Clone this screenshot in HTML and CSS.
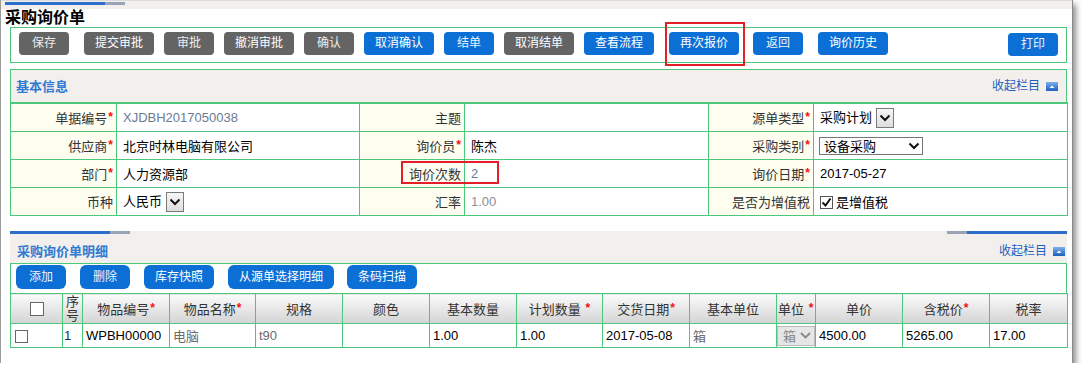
FILE: index.html
```html
<!DOCTYPE html>
<html lang="zh-CN">
<head>
  <meta charset="UTF-8">
  <title>采购询价单</title>
  <link rel="stylesheet" href="styles.css">
</head>
<body>
  <div class="win">
    <div class="topbar"><span class="bar-blue"></span><span class="bar-gray"></span></div>
    <h1 class="title">采购询价单</h1>

    <div class="toolbar">
      <button class="btn gray thin">保存</button>
      <button class="btn gray w4 sp">提交审批</button>
      <button class="btn gray thin">审批</button>
      <button class="btn gray w4">撤消审批</button>
      <button class="btn gray thin">确认</button>
      <button class="btn blue w4">取消确认</button>
      <button class="btn blue thin">结单</button>
      <button class="btn gray w4">取消结单</button>
      <button class="btn blue w4">查看流程</button>
      <span class="mark sp"><button class="btn blue w4">再次报价</button></span>
      <button class="btn blue thin sp4">返回</button>
      <button class="btn blue w4 sp">询价历史</button>
      <span class="fill"></span>
      <button class="btn blue thin print">打印</button>
    </div>

    <!-- 基本信息 -->
    <div class="sec-head boxed">
      <span class="sec-title">基本信息</span>
      <span class="fold">收起栏目<svg class="fold-ico" width="12" height="9" viewBox="0 0 12 9"><defs><linearGradient id="g1" x1="0" y1="0" x2="0" y2="1"><stop offset="0" stop-color="#7fb0ea"/><stop offset="1" stop-color="#1d5fc0"/></linearGradient></defs><rect x="0" y="0" width="12" height="9" fill="url(#g1)"/><path d="M3.5 6 L6 3.5 L8.5 6 Z" fill="#fff"/></svg></span>
    </div>
    <table class="form">
      <colgroup>
        <col style="width:106px"><col style="width:243px"><col style="width:105px">
        <col style="width:244px"><col style="width:105px"><col style="width:254px">
      </colgroup>
      <tr>
        <td class="lbl">单据编号<em>*</em></td>
        <td class="val muted">XJDBH2017050038</td>
        <td class="lbl">主题</td>
        <td class="val"></td>
        <td class="lbl">源单类型<em>*</em></td>
        <td class="val">采购计划<span class="dd"><svg width="12" height="8" viewBox="0 0 12 8"><polyline points="1.5,1.5 6,6 10.5,1.5" fill="none" stroke="#111" stroke-width="2"/></svg></span></td>
      </tr>
      <tr>
        <td class="lbl">供应商<em>*</em></td>
        <td class="val">北京时林电脑有限公司</td>
        <td class="lbl">询价员<em>*</em></td>
        <td class="val">陈杰</td>
        <td class="lbl">采购类别<em>*</em></td>
        <td class="val"><span class="select">设备采购<svg width="12" height="8" viewBox="0 0 12 8"><polyline points="1.5,1.5 6,6 10.5,1.5" fill="none" stroke="#111" stroke-width="2"/></svg></span></td>
      </tr>
      <tr>
        <td class="lbl">部门<em>*</em></td>
        <td class="val">人力资源部</td>
        <td class="lbl marked">询价次数</td>
        <td class="val muted">2</td>
        <td class="lbl">询价日期<em>*</em></td>
        <td class="val">2017-05-27</td>
      </tr>
      <tr>
        <td class="lbl">币种</td>
        <td class="val">人民币<span class="dd"><svg width="12" height="8" viewBox="0 0 12 8"><polyline points="1.5,1.5 6,6 10.5,1.5" fill="none" stroke="#111" stroke-width="2"/></svg></span></td>
        <td class="lbl">汇率</td>
        <td class="val grey">1.00</td>
        <td class="lbl">是否为增值税</td>
        <td class="val"><span class="cb on"><svg width="11" height="11" viewBox="0 0 11 11"><polyline points="1.5,5.5 4.5,8.5 9.5,1.5" fill="none" stroke="#111" stroke-width="2"/></svg></span>是增值税</td>
      </tr>
    </table>

    <!-- 采购询价单明细 -->
    <div class="sec-head detail">
      <div class="strip">
        <span><span class="bar-blue"></span><span class="bar-gray"></span></span>
        <span><span class="bar-gray"></span><span class="bar-blue"></span></span>
      </div>
      <span class="sec-title">采购询价单明细</span>
      <span class="fold">收起栏目<svg class="fold-ico" width="12" height="9" viewBox="0 0 12 9"><defs><linearGradient id="g2" x1="0" y1="0" x2="0" y2="1"><stop offset="0" stop-color="#7fb0ea"/><stop offset="1" stop-color="#1d5fc0"/></linearGradient></defs><rect x="0" y="0" width="12" height="9" fill="url(#g2)"/><path d="M3.5 6 L6 3.5 L8.5 6 Z" fill="#fff"/></svg></span>
    </div>
    <div class="subbar">
      <button class="btn blue big thin">添加</button>
      <button class="btn blue big thin">删除</button>
      <button class="btn blue big w4">库存快照</button>
      <button class="btn blue big w7">从源单选择明细</button>
      <button class="btn blue big w4 tight">条码扫描</button>
    </div>
    <table class="grid">
      <colgroup>
        <col style="width:52px"><col style="width:20px"><col style="width:87px"><col style="width:86px">
        <col style="width:87px"><col style="width:87px"><col style="width:87px"><col style="width:86px">
        <col style="width:87px"><col style="width:87px"><col style="width:39px"><col style="width:87px">
        <col style="width:87px"><col style="width:78px">
      </colgroup>
      <tr class="head">
        <th><span class="cb"></span></th>
        <th class="narrow">序号</th>
        <th>物品编号<em>*</em></th>
        <th>物品名称<em>*</em></th>
        <th>规格</th>
        <th>颜色</th>
        <th>基本数量</th>
        <th>计划数量 <em>*</em></th>
        <th>交货日期<em>*</em></th>
        <th>基本单位</th>
        <th class="left">单位 <em>*</em></th>
        <th>单价</th>
        <th>含税价<em>*</em></th>
        <th>税率</th>
      </tr>
      <tr class="row">
        <td class="chk"><span class="cb"></span></td>
        <td class="no">1</td>
        <td>WPBH00000</td>
        <td class="grey">电脑</td>
        <td class="grey">t90</td>
        <td></td>
        <td>1.00</td>
        <td>1.00</td>
        <td>2017-05-08</td>
        <td class="grey">箱</td>
        <td class="unit"><span class="unit-sel">箱<svg width="11" height="7" viewBox="0 0 11 7"><polyline points="1,1 5.5,5.5 10,1" fill="none" stroke="#888" stroke-width="1.8"/></svg></span></td>
        <td>4500.00</td>
        <td>5265.00</td>
        <td>17.00</td>
      </tr>
    </table>
  </div>
</body>
</html>
```

FILE: styles.css
```css
body {
  margin: 0;
  background: #fff;
  font-family: "Liberation Sans", "Noto Sans CJK SC", sans-serif;
  font-size: 13px;
  color: #333;
}
.win {
  width: 1071px;
  height: 363px;
  border-left: 1px solid #9c9c9c;
  border-right: 1px solid #8a8a8a;
  background: #fff;
  box-shadow: 3px 4px 6px rgba(0, 0, 0, 0.45);
}
.topbar {
  height: 8px;
  border-top: 1px solid #dcdcdc;
  background: #f2efec;
  display: flex;
  padding-left: 4px;
}
.topbar .bar-blue, .topbar .bar-gray {
  margin-top: 1px;
}
.bar-blue {
  display: inline-block;
  width: 100px;
  height: 3px;
  background: #2b6fca;
}
.bar-gray {
  display: inline-block;
  width: 20px;
  height: 3px;
  background: #98a3b6;
}
.title {
  margin: 0;
  padding-left: 4px;
  font-size: 16px;
  line-height: 18px;
  font-weight: bold;
  color: #000;
}

/* buttons */
.btn {
  height: 23px;
  width: 50px;
  padding: 0;
  border: none;
  border-radius: 4px;
  font-family: inherit;
  font-size: 12px;
  line-height: 23px;
  color: #fff;
  flex: none;
}
.btn.w4 { width: 70px; }
.btn.w7 { width: 106px; }
.btn.gray { background: #646464; }
.btn.blue { background: #0c6fd6; }
.btn.thin { color: #eef3fa; }
.btn.gray.thin { color: #ececec; }
.btn.big {
  height: 24px;
  line-height: 24px;
  border-radius: 6px;
  margin-right: 14px;
}
.btn.tight { margin-left: -1px; }

.toolbar {
  margin-left: 9px;
  width: 1057px;
  height: 36px;
  box-sizing: border-box;
  border: 1px solid #4cc87d;
  padding: 4px 8px 0 8px;
  display: flex;
  align-items: flex-start;
  gap: 10px;
}
.toolbar .sp { margin-left: 5px; }
.toolbar .sp4 { margin-left: 4px; }
.toolbar .fill { flex: 1; }
.toolbar .print { margin-top: 1px; }
.mark {
  position: relative;
  display: inline-block;
  height: 23px;
}
.mark::after {
  content: "";
  position: absolute;
  left: -4px;
  right: -6px;
  top: -10px;
  bottom: -11px;
  border: 2px solid #e3202a;
}

/* section heads */
.sec-head {
  margin-left: 9px;
  width: 1057px;
  box-sizing: border-box;
  height: 33px;
  background: #f2efec;
  display: flex;
  align-items: flex-start;
  justify-content: space-between;
}
.sec-head.boxed {
  margin-top: 6px;
  border: 1px solid #4cc87d;
  border-bottom: none;
  padding: 8px 8px 0 5px;
}
.sec-head.detail {
  margin-top: 15px;
  height: 32px;
  flex-wrap: wrap;
  padding: 0 2px 0 7px;
}
.strip {
  width: calc(100% + 9px);
  margin: 0 -2px 0 -7px;
  display: flex;
  justify-content: space-between;
  height: 3px;
}
.strip > span { display: flex; }
.sec-title {
  font-size: 13px;
  font-weight: bold;
  line-height: 17px;
  color: #2f7ad2;
}
.detail .sec-title, .detail .fold {
  margin-top: 6px;
}
.fold {
  font-size: 12px;
  line-height: 17px;
  color: #1f5fbf;
  display: flex;
  align-items: center;
}
.fold-ico {
  margin-left: 6px;
  margin-top: -1px;
}

/* basic info form */
.form {
  margin-left: 9px;
  width: 1057px;
  border-collapse: collapse;
  table-layout: fixed;
}
.form td {
  border: 1px solid #4cc87d;
  height: 27px;
  padding: 0;
  font-size: 13px;
  white-space: nowrap;
}
.form tr:first-child td {
  border-top-width: 2px;
}
.form .lbl {
  background: #fdfdf0;
  text-align: right;
  padding-right: 3px;
  color: #333;
}
.form .val {
  padding-left: 6px;
  color: #000;
}
.form .val.muted { color: #6c7b93; }
.form .val.grey { color: #8a8e99; }
em {
  font-style: normal;
  font-weight: bold;
  color: #f01010;
  font-size: 12px;
  vertical-align: 2px;
  margin-left: 1px;
}
.lbl.marked { position: relative; }
.lbl.marked::after {
  content: "";
  position: absolute;
  left: 41px;
  top: 1px;
  width: 94px;
  height: 19px;
  border: 2px solid #e3202a;
}
.dd {
  display: inline-flex;
  align-items: center;
  justify-content: center;
  box-sizing: border-box;
  width: 18px;
  height: 20px;
  margin-left: 4px;
  border: 1px solid #7a7a7a;
  background: linear-gradient(#f6f6f6, #dedede);
  vertical-align: middle;
}
.select {
  display: inline-flex;
  align-items: center;
  justify-content: space-between;
  box-sizing: border-box;
  width: 104px;
  height: 18px;
  margin-left: -1px;
  padding: 0 2px 0 4px;
  border: 1px solid #767676;
  background: #fff;
  vertical-align: middle;
}
.cb {
  display: inline-block;
  box-sizing: border-box;
  width: 13px;
  height: 13px;
  border: 1px solid #666;
  background: #fff;
  vertical-align: middle;
}
.cb.on {
  border-color: #555;
  margin-right: 3px;
  position: relative;
  top: -1px;
}
.cb.on svg { display: block; margin: 0; }

/* detail grid */
.subbar {
  margin-left: 9px;
  width: 1057px;
  box-sizing: border-box;
  border: 1px solid #4cc87d;
  border-bottom: none;
  padding: 1px 0 4px 5px;
  display: flex;
}
.grid {
  margin-left: 9px;
  width: 1057px;
  border-collapse: collapse;
  table-layout: fixed;
}
.grid th, .grid td {
  border: 1px solid #4cc87d;
  padding: 0;
  white-space: nowrap;
  overflow: hidden;
}
.grid .head th {
  height: 29px;
  background: linear-gradient(#fbfbfb, #d3d3d3);
  font-weight: normal;
  font-size: 13px;
  color: #333;
  text-align: center;
}
.grid .head th.narrow {
  white-space: normal;
  font-size: 13px;
  line-height: 14px;
}
.grid .head th.left {
  text-align: left;
  padding-left: 1px;
}
.grid .head .cb { width: 14px; height: 14px; }
.grid .row td {
  height: 23px;
  font-size: 13px;
  color: #000;
  padding-left: 3px;
}
.grid .row td.grey { color: #6b6b6b; }
.grid .row td.chk { padding-left: 4px; }
.grid .row td.no {
  padding-left: 1px;
  color: #1c2a6e;
}
.grid .row td.unit { padding-left: 0; }
.unit-sel {
  display: flex;
  align-items: center;
  justify-content: space-between;
  box-sizing: border-box;
  width: 38px;
  height: 20px;
  padding: 0 3px 0 5px;
  border: 1px solid #bcbcbc;
  background: #e6e6e6;
  color: #888;
}
```
